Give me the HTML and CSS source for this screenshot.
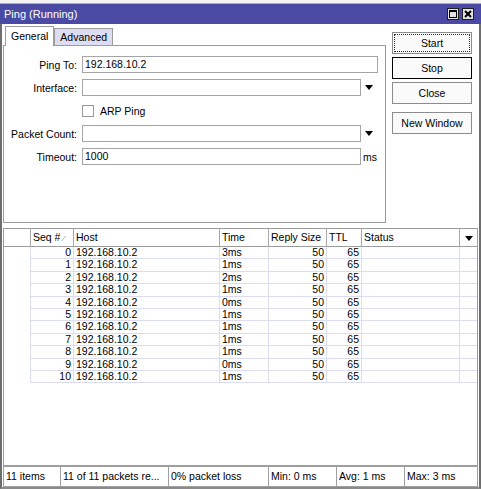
FILE: index.html
```html
<!DOCTYPE html>
<html lang="en">
<head>
  <meta charset="UTF-8" />
  <title>Ping (Running)</title>
  <link rel="stylesheet" href="styles.css">
</head>
<body>
  <div class="topstrip"></div>
  <div class="titlebar">
    <span class="title">Ping (Running)</span>
    <div class="winbtns">
      <span class="wbtn">
        <svg width="8" height="8" viewBox="0 0 8 8"><rect x="0.5" y="0.5" width="7" height="7" fill="none" stroke="#000"/><rect x="0" y="0" width="8" height="2" fill="#000"/></svg>
      </span>
      <span class="wbtn">
        <svg width="8" height="8" viewBox="0 0 8 8"><path d="M1 1L7 7M7 1L1 7" stroke="#000" stroke-width="2"/></svg>
      </span>
    </div>
  </div>

  <div class="body">
    <div class="top">
      <div class="left">
        <div class="tabs">
          <div class="tab active">General</div>
          <div class="tab">Advanced</div>
        </div>
        <div class="panel">
          <div class="row">
            <span class="lbl">Ping To:</span>
            <div class="input w-full">192.168.10.2</div>
          </div>
          <div class="row">
            <span class="lbl">Interface:</span>
            <div class="input w-short"></div>
            <span class="arrow"></span>
          </div>
          <div class="row">
            <span class="lbl"></span>
            <span class="check"></span>
            <span>ARP Ping</span>
          </div>
          <div class="row">
            <span class="lbl">Packet Count:</span>
            <div class="input w-short"></div>
            <span class="arrow"></span>
          </div>
          <div class="row">
            <span class="lbl">Timeout:</span>
            <div class="input w-short">1000</div>
            <span class="unit">ms</span>
          </div>
        </div>
      </div>
      <div class="buttons">
        <div class="btn focus">Start</div>
        <div class="btn default">Stop</div>
        <div class="btn">Close</div>
        <div class="btn spaced">New Window</div>
      </div>
    </div>

    <div class="grid">
      <div class="ghead">
        <div></div>
        <div>Seq # <span class="sort">&#8260;</span></div>
        <div>Host</div>
        <div>Time</div>
        <div>Reply Size</div>
        <div>TTL</div>
        <div>Status</div>
        <div class="menu"><span class="arrow"></span></div>
      </div>
      <div id="rows"></div>
    </div>

    <div class="status">
      <div>11 items</div>
      <div>11 of 11 packets re...</div>
      <div>0% packet loss</div>
      <div>Min: 0 ms</div>
      <div>Avg: 1 ms</div>
      <div>Max: 3 ms</div>
    </div>
  </div>

  <script>
    // seq, time
    const pings = [
      [0, '3ms'], [1, '1ms'], [2, '2ms'], [3, '1ms'], [4, '0ms'], [5, '1ms'],
      [6, '1ms'], [7, '1ms'], [8, '1ms'], [9, '0ms'], [10, '1ms']
    ];
    const rows = document.getElementById('rows');
    pings.forEach(p => {
      const r = document.createElement('div');
      r.className = 'grow';
      r.innerHTML =
        '<div></div>' +
        '<div class="num">' + p[0] + '</div>' +
        '<div>192.168.10.2</div>' +
        '<div>' + p[1] + '</div>' +
        '<div class="num">50</div>' +
        '<div class="num">65</div>' +
        '<div></div><div></div>';
      rows.appendChild(r);
    });
  </script>
</body>
</html>
```

FILE: styles.css
```css
* { box-sizing: border-box; }
body {
  margin: 0;
  width: 481px;
  height: 489px;
  overflow: hidden;
  font-family: "Liberation Sans", Arial, sans-serif;
  font-size: 10.5px;
  color: #000;
  background: #fff;
}
.topstrip {
  height: 4px;
  background: #f4f4f4;
  border-bottom: 1px solid #b0b0b0;
}
.titlebar {
  height: 20px;
  background: #4a4aa5;
  color: #fff;
  font-size: 11px;
  display: flex;
  align-items: center;
  justify-content: space-between;
  padding: 0 7px 0 4px;
}
.winbtns { display: flex; gap: 3px; }
.wbtn {
  width: 12px;
  height: 12px;
  background: #e2e2e2;
  border: 1px solid #1e1e1e;
  display: flex;
  align-items: center;
  justify-content: center;
}
.body {
  height: 465px;
  display: flex;
  flex-direction: column;
  border-left: 2px solid #6e6e6e;
  border-right: 2px solid #6e6e6e;
  border-bottom: 2px solid #8a8a8a;
  padding: 0 1px;
}
.top { display: flex; height: 204px; }
.left { width: 383px; display: flex; flex-direction: column; }
.tabs {
  height: 21px;
  display: flex;
  align-items: flex-end;
  padding-left: 2px;
}
.tab {
  height: 17px;
  padding: 0 5px;
  border: 1px solid #9c9c9c;
  border-bottom: none;
  background: #dcdcf2;
  line-height: 16px;
}
.tab.active {
  height: 20px;
  line-height: 18px;
  background: #fff;
  margin-bottom: -1px;
  position: relative;
  z-index: 1;
}
.panel {
  height: 178px;
  border: 1px solid #9c9c9c;
  padding-top: 10px;
  display: flex;
  flex-direction: column;
  gap: 6px;
}
.row { display: flex; align-items: center; height: 17px; }
.lbl { width: 73px; margin-right: 5px; text-align: right; }
.input {
  height: 17px;
  border: 1px solid #a5a5a5;
  padding-left: 2px;
  line-height: 15px;
  background: #fff;
}
.w-full { width: 296px; }
.w-short { width: 279px; }
.arrow {
  width: 0;
  height: 0;
  margin-left: 4px;
  border-left: 4px solid transparent;
  border-right: 4px solid transparent;
  border-top: 5px solid #000;
}
.unit { margin-left: 2px; }
.check {
  width: 12px;
  height: 12px;
  border: 1px solid #9a9a9a;
  background: #fff;
  margin-right: 6px;
}
.buttons {
  flex: 1;
  padding: 8px 0 0 6px;
  display: flex;
  flex-direction: column;
  gap: 3px;
}
.btn {
  width: 80px;
  height: 22px;
  border: 1px solid #8c8c8c;
  background: #fafafa;
  text-align: center;
  line-height: 20px;
}
.btn.default { border-color: #000; }
.btn.focus { outline: 1px dotted #333; outline-offset: -3px; }
.btn.spaced { margin-top: 5px; }

.grid {
  height: 238px;
  border: 1px solid #9c9c9c;
}
.ghead, .grow {
  display: grid;
  grid-template-columns: 27px 43px 146px 49px 58px 35px 98px 1fr;
}
.ghead {
  height: 18px;
  border-bottom: 1px solid #9c9c9c;
}
.ghead > div {
  border-right: 1px solid #a8a8a8;
  padding-left: 2px;
  line-height: 17px;
  white-space: nowrap;
}
.ghead > div:last-child { border-right: none; }
.ghead .menu { display: flex; align-items: center; justify-content: center; padding: 0; }
.ghead .menu .arrow { margin: 0; }
.sort { font-size: 8px; color: #888; }
.grow { height: 12.4px; }
.grow > div {
  border-right: 1px solid #dcdcef;
  border-bottom: 1px solid #dcdcef;
  padding: 0 2px;
  line-height: 11px;
  white-space: nowrap;
}
.grow > div:first-child { border-bottom: none; }
.grow > div:last-child { border-right: none; }
.num { text-align: right; }

.status {
  height: 21px;
  display: grid;
  grid-template-columns: 57px 108px 100px 68px 68px 1fr;
}
.status > div {
  border: 1px solid #a0a0a0;
  border-right: none;
  padding-left: 2px;
  line-height: 19px;
  white-space: nowrap;
}
.status > div:last-child { border-right: 1px solid #a0a0a0; }
```
